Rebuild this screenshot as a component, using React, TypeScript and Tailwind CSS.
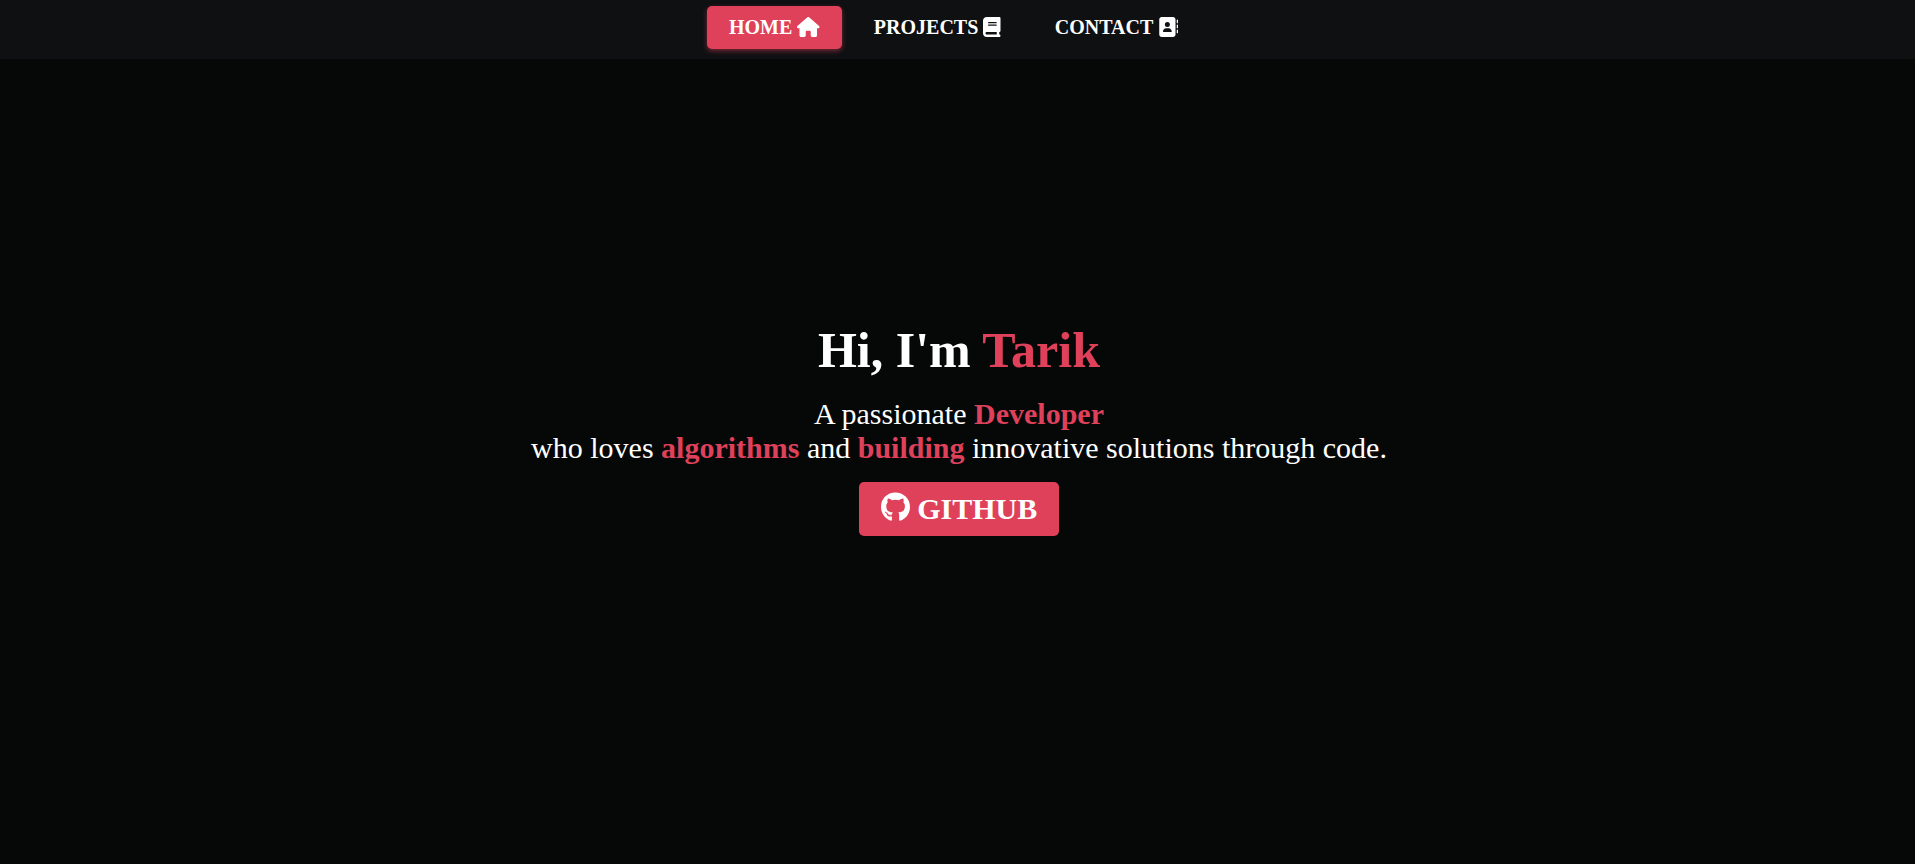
import { FaAddressBook, FaBook, FaGithub, FaHouse } from 'react-icons/fa6';
import type { IconType } from 'react-icons';

type NavItem = { label: string; href: string; icon: IconType; iconWidth: string; active?: boolean };

const navItems: NavItem[] = [
  { label: 'HOME', href: '#home', icon: FaHouse, iconWidth: 'w-[1.125em]', active: true },
  { label: 'PROJECTS', href: '#projects', icon: FaBook, iconWidth: 'w-[0.875em]' },
  { label: 'CONTACT', href: '#contact', icon: FaAddressBook, iconWidth: 'w-[1em]' },
];

function NavLink({ label, href, icon: Icon, iconWidth, active }: NavItem) {
  return (
    <a
      href={href}
      aria-current={active ? 'page' : undefined}
      className={
        active
          ? 'block rounded-[5px] bg-[#df405a] px-[22px] py-2.5 shadow-[0_2px_5px_rgba(223,64,90,0.5)]'
          : 'block rounded-[5px] px-[22px] py-2.5'
      }
    >
      {label} <Icon aria-hidden="true" className={`inline h-[1em] align-[-0.125em] ${iconWidth}`} />
    </a>
  );
}

function Accent({ children }: { children: string }) {
  return <span className="font-bold text-[#df405a]">{children}</span>;
}

export default function App() {
  return (
    <div className="flex min-h-screen flex-col bg-[#060807] font-['Liberation_Serif',serif] text-white">
      <header className="bg-[#0f1012] pt-1.5 pb-2.5">
        <nav aria-label="Main">
          <ul className="flex justify-center gap-2.5 pr-2 text-[20px] leading-[23px] font-bold">
            {navItems.map((item) => (
              <li key={item.label}>
                <NavLink {...item} />
              </li>
            ))}
          </ul>
        </nav>
      </header>
      <main className="flex flex-1 flex-col items-center justify-center pr-4 pb-[66px] pl-[19px] text-center">
        <h1 className="text-[50px] leading-[57px] font-bold">
          Hi, I'm <Accent>Tarik</Accent>
        </h1>
        <p className="mt-[18px] text-[30px] leading-[34px]">
          A passionate <Accent>Developer</Accent>
          <br />
          who loves <Accent>algorithms</Accent> and <Accent>building</Accent> innovative solutions through code.
        </p>
        <a
          href="https://github.com"
          className="mt-[17px] rounded-[5px] bg-[#df405a] px-[22px] py-2.5 text-[30px] leading-[34px] font-bold"
        >
          <FaGithub aria-hidden="true" className="inline h-[1em] w-[29px] align-[-0.125em]" /> GITHUB
        </a>
      </main>
    </div>
  );
}
